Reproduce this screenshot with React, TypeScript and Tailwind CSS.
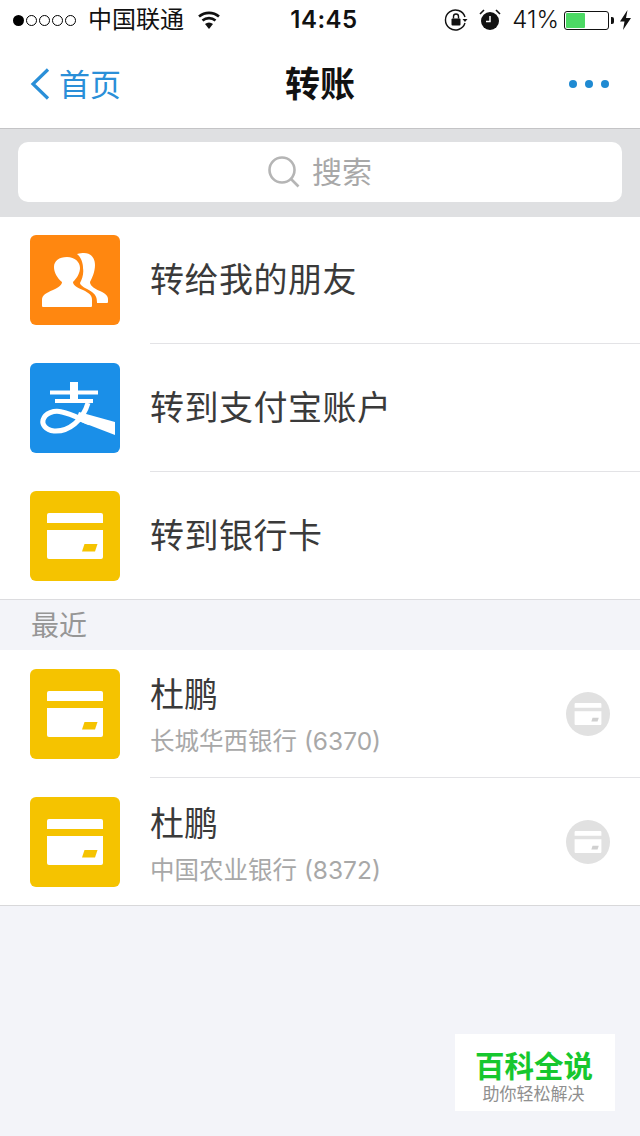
const FONT = "font-['Inter','Noto_Sans_CJK_SC',sans-serif]";

function CardGlyph({ className, slot }: { className?: string; slot: string }) {
  return (
    <svg viewBox="0 0 56 46" className={className}>
      <path d="M0 2a2 2 0 0 1 2-2h52a2 2 0 0 1 2 2v8H0z" fill="#fff" />
      <path d="M0 17h56v27a2 2 0 0 1-2 2H2a2 2 0 0 1-2-2z" fill="#fff" />
      <path d="M37.500 31h13l-2.500 7.500H35z" fill={slot} />
    </svg>
  );
}

function BankIcon() {
  return (
    <div className="flex h-[90px] w-[90px] shrink-0 items-center justify-center rounded-[6px] bg-[#f5c300]">
      <CardGlyph className="h-[46px] w-[56px]" slot="#f5c300" />
    </div>
  );
}

function FriendsIcon() {
  return (
    <div className="h-[90px] w-[90px] shrink-0 rounded-[6px] bg-[#ff8710]">
      <svg viewBox="0 0 90 90" className="h-[90px] w-[90px]" fill="#fff">
        <path d="M12 71V65C12 60 16 58 23 55C29 52 32 50 32 47C27 43 24 37 24 32C24 26 29 22 37 22C45 22 50 27 50 33C50 38 47 43 43 47C43 50 46 52 53 55C59 58 62 60 62 65V71a1 1 0 0 1-1 1H13a1 1 0 0 1-1-1z" />
        <path d="M47 19C50 18 52 18 54 18C61 18 65 23 65 30C65 37 62 43 60 47C60 50 63 53 70 56C76 59 78 61 78 64V67a1 1 0 0 1-1 1H67C67 63 66 60 62 57C56 53 50 51 50 48C52 44 54 39 53 33C53 28 51 22 47 19z" />
      </svg>
    </div>
  );
}

function AlipayIcon() {
  return (
    <div className="h-[90px] w-[90px] shrink-0 rounded-[6px] bg-[#1a8fe8]">
      <svg viewBox="0 0 90 90" className="h-[90px] w-[90px]" fill="none" stroke="#fff">
        <path d="M20 29.500h48" strokeWidth="4" />
        <path d="M25 38h38" strokeWidth="4" />
        <path d="M44 19v19" strokeWidth="8" />
        <path d="M58 40C53 57 39 69 24 68C15 67 12 61 13 57C15 50 24 47 32 49C42 51 50 56 60 60" strokeWidth="5" />
        <path d="M49 49L85 59V72L46 57z" fill="#fff" stroke="none" />
      </svg>
    </div>
  );
}

function Row({ icon, title, divider }: { icon: React.ReactNode; title: string; divider?: boolean }) {
  return (
    <div className="flex h-[128px] items-center pl-[30px]">
      {icon}
      <div className={`ml-[30px] flex h-full flex-1 items-center ${divider ? "border-b border-[#e3e3e6]" : ""}`}>
        <span className="text-[34px] leading-none tracking-[0.5px] text-[#3a3a3a]">{title}</span>
      </div>
    </div>
  );
}

function RecentRow({ name, bank, divider }: { name: string; bank: string; divider?: boolean }) {
  return (
    <div className="flex h-[128px] items-center pl-[30px]">
      <BankIcon />
      <div className={`ml-[30px] flex h-full flex-1 items-center justify-between pr-[30px] ${divider ? "border-b border-[#e3e3e6]" : ""}`}>
        <div className="flex flex-col gap-[12px] pt-[3px]">
          <span className="text-[34px] leading-[40px] text-[#3a3a3a]">{name}</span>
          <span className="text-[24.500px] leading-[28px] text-[#a8a8a8]">{bank}</span>
        </div>
        <div className="flex h-[44px] w-[44px] items-center justify-center rounded-full bg-[#e1e1e1]">
          <CardGlyph className="h-[22px] w-[28px]" slot="#d0d0d0" />
        </div>
      </div>
    </div>
  );
}

function StatusBar() {
  return (
    <div className="flex h-[40px] items-center justify-between pl-[13px] pr-[9px] text-[#111]">
      <div className="flex items-center">
        <div className="flex items-center gap-[2px]">
          <span className="h-[11px] w-[11px] rounded-full bg-black" />
          <span className="h-[11px] w-[11px] rounded-full border border-black" />
          <span className="h-[11px] w-[11px] rounded-full border border-black" />
          <span className="h-[11px] w-[11px] rounded-full border border-black" />
          <span className="h-[11px] w-[11px] rounded-full border border-black" />
        </div>
        <span className="ml-[12px] text-[24px] leading-none">中国联通</span>
        <svg viewBox="0 0 24 18" className="ml-[13px] h-[18px] w-[24px]">
          <path d="M12 18l-4-5a6 6 0 0 1 8 0z" fill="#111" />
          <path d="M5.5 9.5a10 10 0 0 1 13 0M2 5.5a15.5 15.5 0 0 1 20 0" stroke="#111" strokeWidth="2.6" fill="none" />
        </svg>
      </div>
      <div className="absolute left-[8px] right-0 flex justify-center">
        <span className="text-[24px] font-semibold leading-none tracking-[0.5px]">14:45</span>
      </div>
      <div className="flex items-center">
        <svg viewBox="0 0 24 24" className="h-[24px] w-[24px]">
          <path d="M21 15a10 10 0 1 1 0-6" stroke="#111" strokeWidth="1.4" fill="none" />
          <path d="M18.5 11h5l-2.5 3z" fill="#111" />
          <rect x="7.5" y="10.5" width="9" height="7" rx="1" fill="#111" />
          <path d="M9.5 10.5V8.500a2.500 2.500 0 0 1 5 0v2" stroke="#111" strokeWidth="1.4" fill="none" />
        </svg>
        <svg viewBox="0 0 22 22" className="ml-[11px] h-[22px] w-[22px]">
          <circle cx="11" cy="12" r="9" fill="#111" />
          <path d="M11 7v5.500H7" stroke="#fff" strokeWidth="1.5" fill="none" />
          <path d="M1 5l4-4M21 5l-4-4" stroke="#111" strokeWidth="1.6" />
        </svg>
        <span className="ml-[11px] text-[24px] font-light leading-none">41%</span>
        <div className="ml-[5px] flex h-[19px] w-[45px] rounded-[3px] border border-[#111] p-[1px]">
          <div className="h-full w-[19px] rounded-[1px] bg-[#4cd964]" />
        </div>
        <span className="ml-[2px] h-[7px] w-[3px] rounded-r-[2px] bg-[#111]" />
        <svg viewBox="0 0 11 20" className="ml-[6px] h-[20px] w-[11px]">
          <path d="M7.500 0L0 11.500h4.500L3 20l8-12H6z" fill="#111" />
        </svg>
      </div>
    </div>
  );
}

function NavBar() {
  return (
    <div className="relative flex h-[89px] items-center justify-between border-b border-[#c4c4c6] pl-[30px] pr-[31px]">
      <div className="flex items-center">
        <svg viewBox="0 0 20 32" className="h-[32px] w-[20px]">
          <path d="M18 1.500L3 16l15 14.500" stroke="#2a8fd8" strokeWidth="3.200" fill="none" />
        </svg>
        <span className="ml-[9px] text-[31px] leading-none text-[#2a8fd8]">首页</span>
      </div>
      <span className="absolute inset-x-0 text-center text-[35px] font-bold leading-none text-[#111]">转账</span>
      <div className="flex items-center gap-[8px]">
        <span className="h-[8px] w-[8px] rounded-full bg-[#1f8ad2]" />
        <span className="h-[8px] w-[8px] rounded-full bg-[#1f8ad2]" />
        <span className="h-[8px] w-[8px] rounded-full bg-[#1f8ad2]" />
      </div>
    </div>
  );
}

export default function App() {
  return (
    <div className={`relative h-[1136px] w-[640px] overflow-hidden bg-[#f3f4f9] ${FONT}`}>
      <div className="bg-white">
        <StatusBar />
        <NavBar />
      </div>

      <div className="relative z-10 -mb-[1px] bg-[#dfe0e2] px-[18px] pb-[15px] pt-[13px]">
        <div className="flex h-[60px] items-center justify-center gap-[12px] rounded-[10px] bg-white">
          <svg viewBox="0 0 32 32" className="h-[32px] w-[32px]">
            <circle cx="14" cy="14" r="12.500" stroke="#b5b5b5" strokeWidth="2.600" fill="none" />
            <path d="M23 23l7.500 7.500" stroke="#b5b5b5" strokeWidth="2.600" />
          </svg>
          <span className="text-[30px] leading-none text-[#a8a8a8]">搜索</span>
        </div>
      </div>

      <div className="bg-white">
        <Row icon={<FriendsIcon />} title="转给我的朋友" divider />
        <Row icon={<AlipayIcon />} title="转到支付宝账户" divider />
        <Row icon={<BankIcon />} title="转到银行卡" />
      </div>

      <div className="-mt-[1px] flex h-[51px] items-center border-t border-[#dcdcdf] pl-[31px] pt-[1px] text-[28px] leading-none text-[#969696]">
        最近
      </div>

      <div className="h-[256px] border-b border-[#d8d8da] bg-white">
        <RecentRow name="杜鹏" bank="长城华西银行 (6370)" divider />
        <RecentRow name="杜鹏" bank="中国农业银行 (8372)" />
      </div>

      <div className="absolute left-[455px] top-[1034px] flex h-[77px] w-[160px] flex-col items-center bg-white pt-[15px]">
        <span className="-ml-[2px] text-[29.500px] font-bold leading-[34px] text-[#16c72e]">百科全说</span>
        <span className="-ml-[3px] text-[17px] leading-[22px] text-[#8f8f8f]">助你轻松解决</span>
      </div>
    </div>
  );
}
